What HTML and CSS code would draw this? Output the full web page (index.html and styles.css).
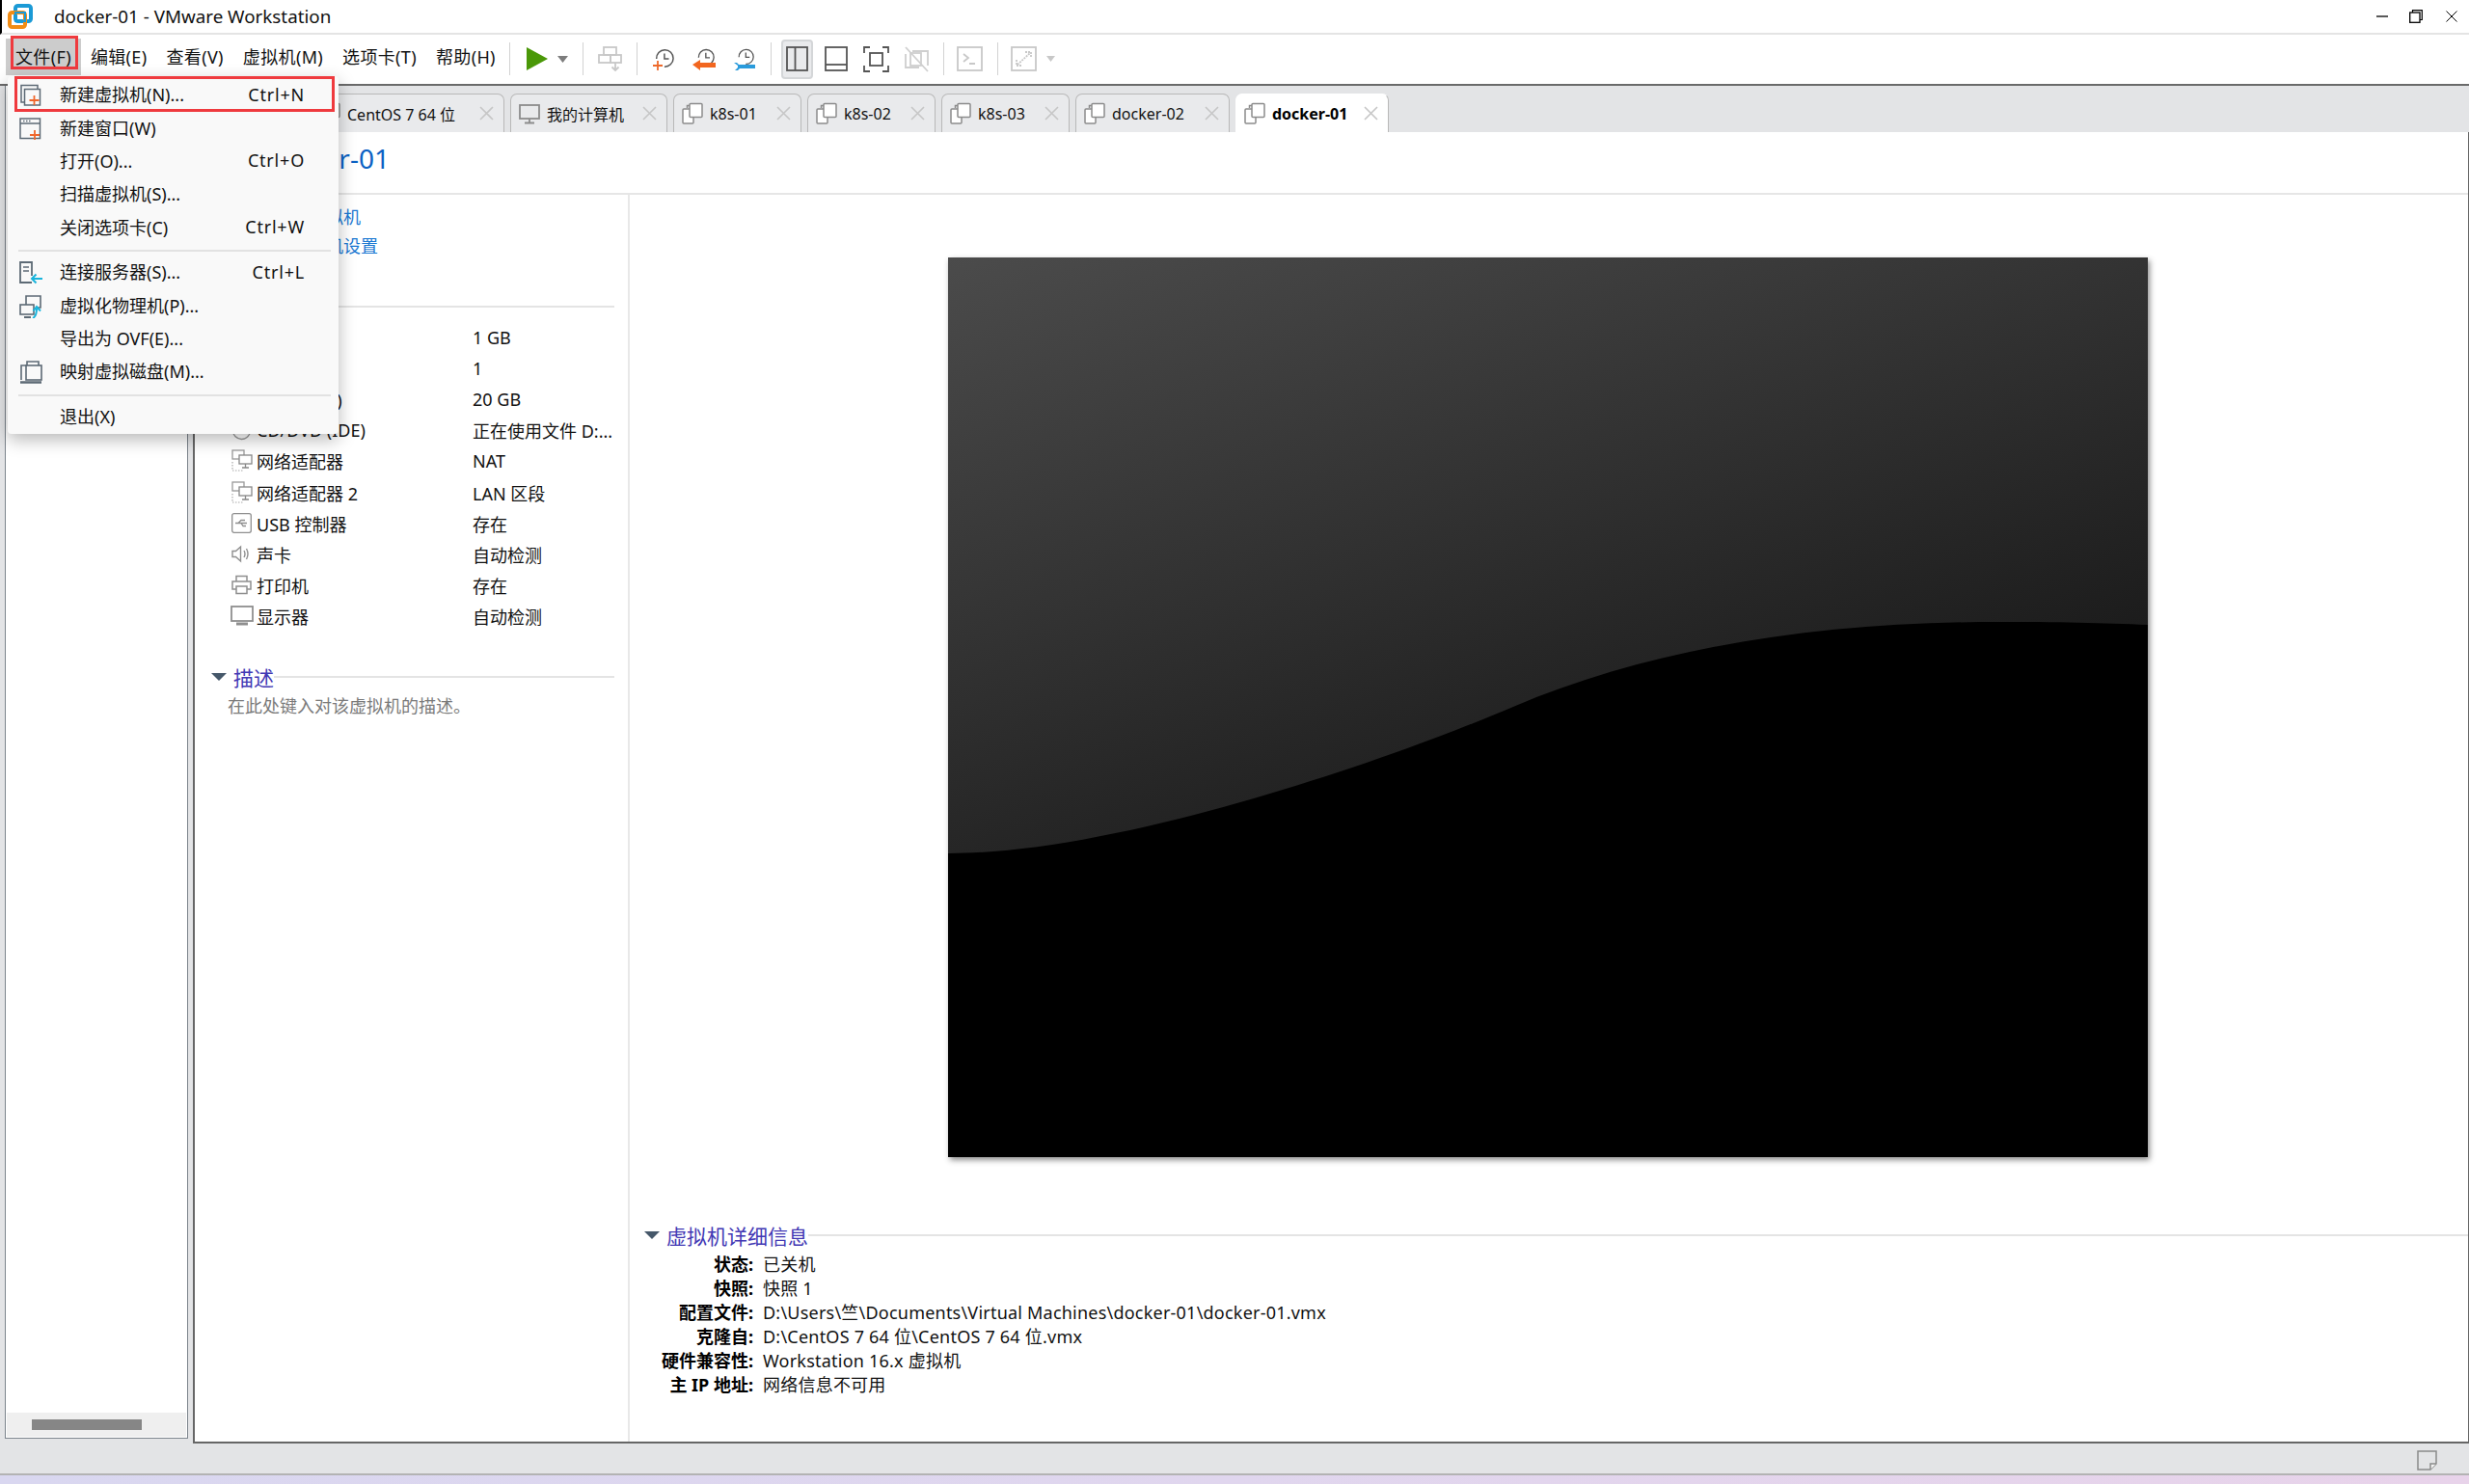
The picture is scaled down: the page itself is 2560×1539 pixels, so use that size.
FILE: index.html
```html
<!DOCTYPE html>
<html lang="zh-CN">
<head>
<meta charset="utf-8">
<title>docker-01 - VMware Workstation</title>
<link rel="stylesheet" href="styles.css">
</head>
<body>
<svg class="defs" width="0" height="0" aria-hidden="true">
  <symbol id="i-vm" viewBox="0 0 22 24">
    <path d="M5.5 6V3.500H9" fill="none" stroke="#8c8c8c" stroke-width="1.500"/>
    <rect x="1" y="7" width="11" height="15" rx="1" fill="#fff" stroke="#8c8c8c" stroke-width="1.500"/>
    <rect x="8" y="1.500" width="13" height="14" rx="1" fill="#fff" stroke="#8c8c8c" stroke-width="1.500"/>
  </symbol>
  <symbol id="i-x" viewBox="0 0 15 15">
    <path d="M1 1L14 14M14 1L1 14" stroke="#c6c6c6" stroke-width="1.600" fill="none"/>
  </symbol>
  <symbol id="i-net" viewBox="0 0 22 24">
    <rect x="1" y="1" width="12" height="9" fill="#fff" stroke="#999" stroke-width="1.300"/>
    <path d="M1 13v9h11" fill="none" stroke="#aaa" stroke-width="1.200" stroke-dasharray="1.500 1.500"/>
    <rect x="8" y="6" width="13" height="9" fill="#fff" stroke="#888" stroke-width="1.300"/>
    <path d="M14.500 15v4M11 19h7" stroke="#888" stroke-width="1.300" fill="none"/>
  </symbol>
  <symbol id="i-clock" viewBox="0 0 24 24">
    <path d="M4 13A9.500 9.500 0 1 1 13 22" fill="none" stroke="#555" stroke-width="1.600"/>
    <path d="M13 7v6h5" fill="none" stroke="#555" stroke-width="1.600"/>
  </symbol>
</svg>

<div class="app">
  <header class="titlebar">
    <svg class="logo" width="26" height="26" viewBox="0 0 26 26">
      <rect x="8" y="2" width="16" height="16" rx="2.500" fill="none" stroke="#1b9ad6" stroke-width="4"/>
      <rect x="2" y="9" width="16" height="15" rx="2.500" fill="none" stroke="#f28c14" stroke-width="4"/>
      <path d="M8 9h10v9H8z" fill="none" stroke="#1b9ad6" stroke-width="2"/>
    </svg>
    <span class="window-title">docker-01 - VMware Workstation</span>
    <div class="window-controls">
      <svg class="win-min" width="12" height="2" viewBox="0 0 12 2"><path d="M0 1h12" stroke="#000" stroke-width="1.300"/></svg>
      <svg class="win-restore" width="14" height="14" viewBox="0 0 14 14"><path d="M3.500 3V.700H13.300V10.500H11" fill="none" stroke="#000" stroke-width="1.200"/><rect x=".7" y="3" width="10.300" height="10.300" fill="none" stroke="#000" stroke-width="1.300"/></svg>
      <svg class="win-close" width="12" height="12" viewBox="0 0 12 12"><path d="M.5.500l11 11M11.500.500l-11 11" stroke="#000" stroke-width="1"/></svg>
    </div>
  </header>

  <div class="menubar">
    <nav class="menus">
      <span class="menu-top open">文件(F)</span>
      <span class="menu-top">编辑(E)</span>
      <span class="menu-top">查看(V)</span>
      <span class="menu-top">虚拟机(M)</span>
      <span class="menu-top">选项卡(T)</span>
      <span class="menu-top">帮助(H)</span>
    </nav>
    <div class="toolbar">
      <div class="tool-group g-play">
        <svg width="22" height="24" viewBox="0 0 22 24"><path d="M0 0L22 12L0 24Z" fill="#4a9808"/></svg>
        <svg width="11" height="7" viewBox="0 0 11 7"><path d="M0 0h11L5.500 7z" fill="#7d7d7d"/></svg>
      </div>
      <div class="tool-group g-send">
        <svg width="25" height="26" viewBox="0 0 25 26" fill="none" stroke="#c8c8c8" stroke-width="1.800"><rect x="6" y="1" width="13" height="8"/><rect x="1" y="9" width="12" height="8"/><rect x="13" y="9" width="11" height="8"/><path d="M18 17v8M14.500 21.500L18 25l3.500-3.500"/></svg>
      </div>
      <div class="tool-group g-snap">
        <svg width="22" height="25" viewBox="0 0 22 25"><use href="#i-clock" width="22" height="22" x="0" y="0"/><path d="M5 14v10M0 19h10" stroke="#ee6a2c" stroke-width="1.800"/></svg>
        <svg width="24" height="25" viewBox="0 0 24 25"><use href="#i-clock" width="20" height="20" x="3" y="0"/><path d="M0 18l8-5v3h16v5H8v3z" fill="#f2661f"/></svg>
        <svg width="22" height="25" viewBox="0 0 22 25"><use href="#i-clock" width="19" height="19" x="2" y="0"/><path d="M0 16h3l2 2h17v4H6l-2 2H1l3-3v-2z" fill="#2a9bdc"/></svg>
      </div>
      <div class="tool-group g-view">
        <span class="view-btn">
          <svg width="23" height="26" viewBox="0 0 23 26" fill="none" stroke="#555" stroke-width="1.800"><rect x="1" y="1" width="21" height="24"/><path d="M9.500 1v24"/></svg>
        </span>
        <svg width="24" height="26" viewBox="0 0 24 26" fill="none" stroke="#555" stroke-width="1.800"><rect x="1" y="1" width="22" height="24"/><path d="M1 19h22"/></svg>
        <svg width="27" height="27" viewBox="0 0 27 27" fill="none" stroke="#555" stroke-width="1.800"><path d="M1 7V1h6M20 1h6v6M26 20v6h-6M7 26H1v-6"/><rect x="7" y="7" width="13" height="13"/></svg>
        <svg width="25" height="27" viewBox="0 0 25 27" fill="none" stroke="#cfcfcf" stroke-width="1.800"><path d="M8 5h16v15M1 8v14h14"/><path d="M1 1l23 25"/><rect x="6" y="7" width="11" height="13"/></svg>
      </div>
      <div class="tool-group g-console">
        <svg width="27" height="26" viewBox="0 0 27 26" fill="none" stroke="#c8c8c8" stroke-width="1.800"><rect x="1" y="1" width="25" height="24"/><path d="M7 8l5 4-5 4M13 18h6"/></svg>
      </div>
      <div class="tool-group g-stretch">
        <svg width="27" height="26" viewBox="0 0 27 26" fill="none" stroke="#c8c8c8" stroke-width="1.800"><rect x="1" y="1" width="25" height="24"/><path d="M7 19L20 7M15 6h6v6M6 14v6h6" stroke-dasharray="2 1"/></svg>
        <svg width="9" height="6" viewBox="0 0 9 6"><path d="M0 0h9L4.500 6z" fill="#c8c8c8"/></svg>
      </div>
    </div>
  </div>

  <div class="workspace">
    <aside class="sidebar">
      <div class="side-list"></div>
      <div class="side-scroll"><span class="side-thumb"></span></div>
    </aside>

    <main class="content">
      <div class="tabstrip">
        <div class="tab tab-centos"><svg class="tab-icon"><use href="#i-vm"/></svg><span>CentOS 7 64 位</span><svg class="tab-x"><use href="#i-x"/></svg></div>
        <div class="tab tab-home">
          <svg class="tab-icon" viewBox="0 0 22 24" fill="none" stroke="#8c8c8c" stroke-width="1.800"><rect x="1" y="3" width="20" height="14"/><path d="M11 17v4M6 21.500h10"/></svg>
          <span>我的计算机</span><svg class="tab-x"><use href="#i-x"/></svg>
        </div>
        <div class="tab"><svg class="tab-icon"><use href="#i-vm"/></svg><span>k8s-01</span><svg class="tab-x"><use href="#i-x"/></svg></div>
        <div class="tab"><svg class="tab-icon"><use href="#i-vm"/></svg><span>k8s-02</span><svg class="tab-x"><use href="#i-x"/></svg></div>
        <div class="tab"><svg class="tab-icon"><use href="#i-vm"/></svg><span>k8s-03</span><svg class="tab-x"><use href="#i-x"/></svg></div>
        <div class="tab tab-wide"><svg class="tab-icon"><use href="#i-vm"/></svg><span>docker-02</span><svg class="tab-x"><use href="#i-x"/></svg></div>
        <div class="tab tab-wide active"><svg class="tab-icon"><use href="#i-vm"/></svg><span>docker-01</span><svg class="tab-x"><use href="#i-x"/></svg></div>
      </div>

      <div class="page">
        <h1 class="vm-name">docker-01</h1>
        <div class="columns">
          <section class="col-left">
            <div class="links">
              <a class="link">开启此虚拟机</a>
              <a class="link">编辑虚拟机设置</a>
            </div>

            <div class="sec-head sec-devices"><i class="arrow"></i><span>设备</span><b class="rule"></b></div>
            <div class="devices">
              <div class="device"><span class="dev-icon"></span><span class="dev-label">内存</span><span>1 GB</span></div>
              <div class="device"><span class="dev-icon"></span><span class="dev-label">处理器</span><span>1</span></div>
              <div class="device"><span class="dev-icon"></span><span class="dev-label">硬盘 (SCSI)</span><span>20 GB</span></div>
              <div class="device">
                <span class="dev-icon"><svg width="21" height="21" viewBox="0 0 21 21" fill="none" stroke="#999" stroke-width="1.400"><circle cx="10.500" cy="10.500" r="9"/><circle cx="10.500" cy="10.500" r="2"/></svg></span>
                <span class="dev-label">CD/DVD (IDE)</span><span>正在使用文件 D:...</span>
              </div>
              <div class="device"><span class="dev-icon"><svg width="22" height="24"><use href="#i-net"/></svg></span><span class="dev-label">网络适配器</span><span>NAT</span></div>
              <div class="device"><span class="dev-icon"><svg width="22" height="24"><use href="#i-net"/></svg></span><span class="dev-label">网络适配器 2</span><span>LAN 区段</span></div>
              <div class="device">
                <span class="dev-icon"><svg width="21" height="21" viewBox="0 0 21 21" fill="none" stroke="#8f8f8f" stroke-width="1.300"><rect x=".7" y=".7" width="19.600" height="19.600" rx="2"/><path d="M4 10.500h12M7 10.500l3-3h4M10 10.500l2 3h3"/></svg></span>
                <span class="dev-label">USB 控制器</span><span>存在</span>
              </div>
              <div class="device">
                <span class="dev-icon"><svg width="19" height="19" viewBox="0 0 19 19" fill="none" stroke="#8f8f8f" stroke-width="1.400"><path d="M1 6.500h3.500L9.500 2v15l-5-4.500H1z"/><path d="M13 6q2 3.500 0 7M15.500 4q3 5.500 0 11"/></svg></span>
                <span class="dev-label">声卡</span><span>自动检测</span>
              </div>
              <div class="device">
                <span class="dev-icon"><svg width="21" height="21" viewBox="0 0 21 21" fill="none" stroke="#8f8f8f" stroke-width="1.500"><path d="M5 7V1.500h11V7"/><path d="M5 15H1V7h19v8h-4"/><rect x="5" y="12" width="11" height="7.500"/></svg></span>
                <span class="dev-label">打印机</span><span>存在</span>
              </div>
              <div class="device">
                <span class="dev-icon dev-mon"><svg width="24" height="21" viewBox="0 0 24 21"><rect x="1" y="1" width="22" height="15" fill="#fff" stroke="#8f8f8f" stroke-width="1.800"/><path d="M6 19h12" stroke="#8f8f8f" stroke-width="3"/></svg></span>
                <span class="dev-label">显示器</span><span>自动检测</span>
              </div>
            </div>

            <div class="sec-head sec-desc"><i class="arrow"></i><span>描述</span><b class="rule"></b></div>
            <p class="desc">在此处键入对该虚拟机的描述。</p>
          </section>

          <section class="col-right">
            <svg class="thumb" width="1244" height="933" viewBox="0 0 1244 933">
              <defs>
                <linearGradient id="glow" gradientUnits="userSpaceOnUse" x1="0" y1="0" x2="228" y2="710">
                  <stop offset="0" stop-color="#4b4b4b"/>
                  <stop offset="1" stop-color="#1c1c1c"/>
                </linearGradient>
              </defs>
              <rect width="1244" height="933" fill="#000"/>
              <path d="M0 0H1244V381C1200 379 1150 378 1088 378C900 378 730 405 586 466C440 528 170 618 0 618Z" fill="url(#glow)"/>
            </svg>

            <div class="details">
              <div class="sec-head"><i class="arrow"></i><span>虚拟机详细信息</span><b class="rule"></b></div>
              <dl class="facts">
                <dt>状态:</dt><dd>已关机</dd>
                <dt>快照:</dt><dd>快照 1</dd>
                <dt>配置文件:</dt><dd>D:\Users\竺\Documents\Virtual Machines\docker-01\docker-01.vmx</dd>
                <dt>克隆自:</dt><dd>D:\CentOS 7 64 位\CentOS 7 64 位.vmx</dd>
                <dt>硬件兼容性:</dt><dd>Workstation 16.x 虚拟机</dd>
                <dt>主 IP 地址:</dt><dd>网络信息不可用</dd>
              </dl>
            </div>
          </section>
        </div>
      </div>
    </main>
  </div>

  <div class="statusbar">
    <svg width="21" height="21" viewBox="0 0 21 21" fill="#e3e4e6" stroke="#8a8a8a" stroke-width="1.500"><path d="M1 1h19v13l-6 6H1z"/><path d="M20 14h-6v6" fill="#f4f4f4"/></svg>
  </div>
  <div class="desktop"></div>
</div>

<div class="file-menu">
  <div class="item marked">
    <svg class="item-icon" width="24" height="24" viewBox="0 0 24 24" fill="none" stroke="#5d6a75" stroke-width="1.500"><path d="M19 5V1.500H2V19h3"/><path d="M5.500 5.500h16V22h-16z"/><path d="M15.500 12v10M10.500 17h10" stroke="#f0662c" stroke-width="1.800"/></svg>
    <span class="item-label">新建虚拟机(N)...</span><span class="item-key">Ctrl+N</span>
  </div>
  <div class="item">
    <svg class="item-icon" width="24" height="24" viewBox="0 0 24 24" fill="none" stroke="#5d6a75" stroke-width="1.500"><path d="M1 1h20.500v20.500H1z"/><path d="M1 6h20.500"/><path d="M4 3.500h8" stroke-dasharray="1.500 1.500"/><path d="M16 13v10M11 18h10" stroke="#f0662c" stroke-width="1.800"/></svg>
    <span class="item-label">新建窗口(W)</span>
  </div>
  <div class="item"><span class="item-icon"></span><span class="item-label">打开(O)...</span><span class="item-key">Ctrl+O</span></div>
  <div class="item"><span class="item-icon"></span><span class="item-label">扫描虚拟机(S)...</span></div>
  <div class="item"><span class="item-icon"></span><span class="item-label">关闭选项卡(C)</span><span class="item-key">Ctrl+W</span></div>
  <div class="sep"></div>
  <div class="item">
    <svg class="item-icon" width="24" height="24" viewBox="0 0 24 24" fill="none" stroke="#5d6a75" stroke-width="1.800"><path d="M13 22H1V1h12v14"/><path d="M4 6h6M4 10h6" stroke-width="1.400"/><path d="M24 18H13M17.500 13.500L13 18l4.500 4.500" stroke="#18b4dc" stroke-width="2"/></svg>
    <span class="item-label">连接服务器(S)...</span><span class="item-key">Ctrl+L</span>
  </div>
  <div class="item">
    <svg class="item-icon" width="24" height="24" viewBox="0 0 24 24" fill="none" stroke="#5d6a75" stroke-width="1.600"><path d="M7 10V1h15v12h-3"/><rect x="1" y="10" width="14" height="10"/><path d="M5 23h7" stroke-width="2"/><path d="M14 24q4-2 4-10M14.500 16.500L18 12l4 4.500" stroke="#18b4dc" stroke-width="2"/></svg>
    <span class="item-label">虚拟化物理机(P)...</span>
  </div>
  <div class="item"><span class="item-icon"></span><span class="item-label">导出为 OVF(E)...</span></div>
  <div class="item">
    <svg class="item-icon" width="24" height="24" viewBox="0 0 24 24" fill="none" stroke="#5d6a75" stroke-width="1.600"><path d="M8 5V1h12v4"/><path d="M2 20V5h6"/><rect x="7" y="5" width="16" height="15"/><path d="M1 22.500h22" stroke-width="2.500"/></svg>
    <span class="item-label">映射虚拟磁盘(M)...</span>
  </div>
  <div class="sep"></div>
  <div class="item"><span class="item-icon"></span><span class="item-label">退出(X)</span></div>
</div>
</body>
</html>
```
FILE: styles.css
```css
* { box-sizing: border-box; }
html, body { margin: 0; padding: 0; }
body {
  width: 2560px;
  height: 1539px;
  overflow: hidden;
  position: relative;
  font-family: "Noto Sans", "Noto Sans CJK SC", sans-serif;
  font-size: 18px;
  color: #111;
}
.defs { position: absolute; }

.app { display: flex; flex-direction: column; height: 1539px; background: #e3e4e6; }

/* title bar */
.titlebar {
  height: 36px;
  flex: none;
  display: flex;
  align-items: center;
  background: #fff;
  border-left: 2px solid #000;
  border-bottom: 2px solid #e4e4e4;
}
.logo { margin-left: 6px; }
.window-title { margin-left: 22px; font-size: 18.800px; line-height: 34px; }
.window-controls { margin-left: auto; display: flex; align-items: center; }
.win-min { margin-right: 22px; }
.win-restore { margin-right: 24px; }
.win-close { margin-right: 12px; }

/* menu + toolbar */
.menubar {
  height: 53px;
  flex: none;
  display: flex;
  align-items: flex-start;
  background: #fff;
  border-bottom: 2px solid #6a6a6a;
  padding-left: 6px;
}
.menus { display: flex; margin-top: 4px; }
.menu-top {
  padding: 0 10px;
  height: 38px;
  line-height: 38px;
  letter-spacing: 0.35px;
  white-space: nowrap;
  position: relative;
}
.menu-top.open { background: #cccccc; }
.menu-top.open::after {
  content: "";
  position: absolute;
  left: 5px; top: -3px; right: 3px; bottom: 6px;
  border: 3px solid #ef3a3e;
}
.toolbar { display: flex; margin-top: 8px; margin-left: 4px; }
.tool-group {
  height: 34px;
  display: flex;
  align-items: center;
  border-left: 1px solid #d2d2d2;
}
.g-play { width: 76px; padding-left: 17px; gap: 10px; }
.g-send { width: 56px; padding-left: 15px; }
.g-snap { width: 139px; padding-left: 16px; gap: 19px; }
.g-view { width: 179px; padding-left: 10px; gap: 16px; }
.g-console { width: 56px; padding-left: 13px; }
.g-stretch { padding-left: 13px; gap: 10px; }
.view-btn {
  width: 33px; height: 41px;
  margin-right: -4px;
  display: flex; align-items: center; justify-content: center;
  background: #e9eaec;
  border: 2px solid #d4d6d8;
  border-radius: 4px;
}

/* workspace */
.workspace { flex: 1; display: flex; min-height: 0; }
.sidebar {
  width: 190px;
  margin-left: 5px;
  margin-bottom: 5px;
  display: flex;
  flex-direction: column;
  background: #fff;
  border: 1.500px solid #7d858d;
  border-top: 0;
  padding: 0 1px 1px;
}
.side-list { flex: 1; }
.side-scroll { height: 25px; flex: none; background: #efefef; display: flex; align-items: center; padding-left: 26px; }
.side-thumb { width: 114px; height: 11px; background: #868686; }

.content { width: 2360px; margin-left: 5px; display: flex; flex-direction: column; }

/* tabs */
.tabstrip { height: 48px; flex: none; display: flex; gap: 6px; padding: 8px 0 0 119px; }
.tab {
  width: 133px;
  height: 40px;
  display: flex;
  align-items: center;
  background: #e9eaec;
  border: 1px solid #b8b8b8;
  border-bottom: 0;
  border-radius: 7px 7px 0 0;
  padding: 0 10px 0 8px;
  font-size: 16px;
  white-space: nowrap;
}
.tab-centos { width: 204px; padding-left: 11px; }
.tab-home { width: 163px; }
.tab-wide { width: 160px; }
.tab.active { width: 159px; background: #fff; font-weight: 700; border-color: #fff #b8b8b8 #fff #fff; color: #000; }
.tab-icon { width: 22px; height: 24px; margin-right: 7px; flex: none; }
.tab-x { width: 15px; height: 15px; margin-left: auto; flex: none; }

/* page */
.page {
  flex: 1;
  min-height: 0;
  display: flex;
  flex-direction: column;
  background: #fff;
  border-style: solid;
  border-color: #666;
  border-width: 0 1px 2px 2px;
}
.vm-name {
  height: 65px;
  flex: none;
  margin: 0;
  padding-left: 71px;
  font-size: 28px;
  font-weight: 400;
  line-height: 54px;
  color: #0b62c4;
  border-bottom: 2px solid #e6e6e6;
}
.columns { flex: 1; display: flex; min-height: 0; }
.col-left { width: 451px; flex: none; border-right: 2px solid #e8e8e8; padding: 8px 14px 0 17px; }
.col-right { flex: 1; display: flex; flex-direction: column; align-items: center; padding: 65px 2px 0 0; }

.links { display: flex; flex-direction: column; padding-left: 47px; }
.link { height: 30px; line-height: 30px; color: #1a78d2; }

.sec-head { height: 30px; display: flex; align-items: center; color: #4238b4; font-size: 21px; }
.sec-head .arrow {
  width: 0; height: 0;
  border-style: solid;
  border-width: 8px 8px 0;
  border-color: #46586a transparent transparent;
  margin-right: 7px;
  flex: none;
}
.rule { flex: 1; height: 2px; background: #e4e4e4; display: block; }
.sec-devices { margin-top: 33px; }
.sec-desc { margin-top: 32px; }

.devices { margin-top: 1px; padding-left: 21px; }
.device { height: 32.100px; display: flex; align-items: center; white-space: nowrap; }
.dev-icon { width: 26px; flex: none; display: flex; align-items: center; }
.dev-mon { margin-left: -1px; width: 27px; }
.dev-label { width: 224px; flex: none; }

.desc { margin: 0; padding-left: 17px; height: 30px; line-height: 30px; color: #7a7a7a; font-size: 18px; }

.thumb { flex: none; box-shadow: 2px 3px 6px rgba(0, 0, 0, 0.45); display: block; }
.details { align-self: stretch; margin: 66px -2px 0 0; padding-left: 15px; }
.facts {
  margin: 3px 0 0;
  display: grid;
  grid-template-columns: 113px 1fr;
  grid-auto-rows: 25px;
  column-gap: 10px;
  line-height: 25px;
}
.facts dt { font-weight: 700; text-align: right; white-space: nowrap; color: #000; }
.facts dd { margin: 0; white-space: nowrap; letter-spacing: 0.22px; }

/* status + desktop */
.statusbar {
  height: 31px;
  flex: none;
  display: flex;
  align-items: center;
  justify-content: flex-end;
  padding: 3px 33px 0 0;
}
.desktop {
  height: 11px;
  flex: none;
  background: linear-gradient(90deg, #d9d7f0, #e0d6ee 50%, #e8d3ea);
  border-top: 2px solid #b3b3b3;
}

/* open File menu */
.file-menu {
  position: absolute;
  left: 8px;
  top: 79px;
  width: 343px;
  height: 371px;
  padding-top: 3px;
  background: #f9f9f9;
  border-radius: 4px;
  box-shadow: 0 6px 18px rgba(0, 0, 0, 0.28);
}
.item {
  height: 34.400px;
  display: flex;
  align-items: center;
  padding-left: 12px;
  position: relative;
  white-space: nowrap;
}
.item-icon { width: 24px; height: 24px; flex: none; margin-right: 18px; }
.item-label { padding-bottom: 4px; }
.item-key { padding-bottom: 3px; margin-left: auto; margin-right: 35px; letter-spacing: 0.8px; }
.item.marked::after {
  content: "";
  position: absolute;
  left: 7px; right: 4px; top: -3px; bottom: 0;
  border: 3px solid #ef3a3e;
}
.sep { height: 2px; margin: 5px 8px 5px 11px; background: #e2e2e2; }
```
